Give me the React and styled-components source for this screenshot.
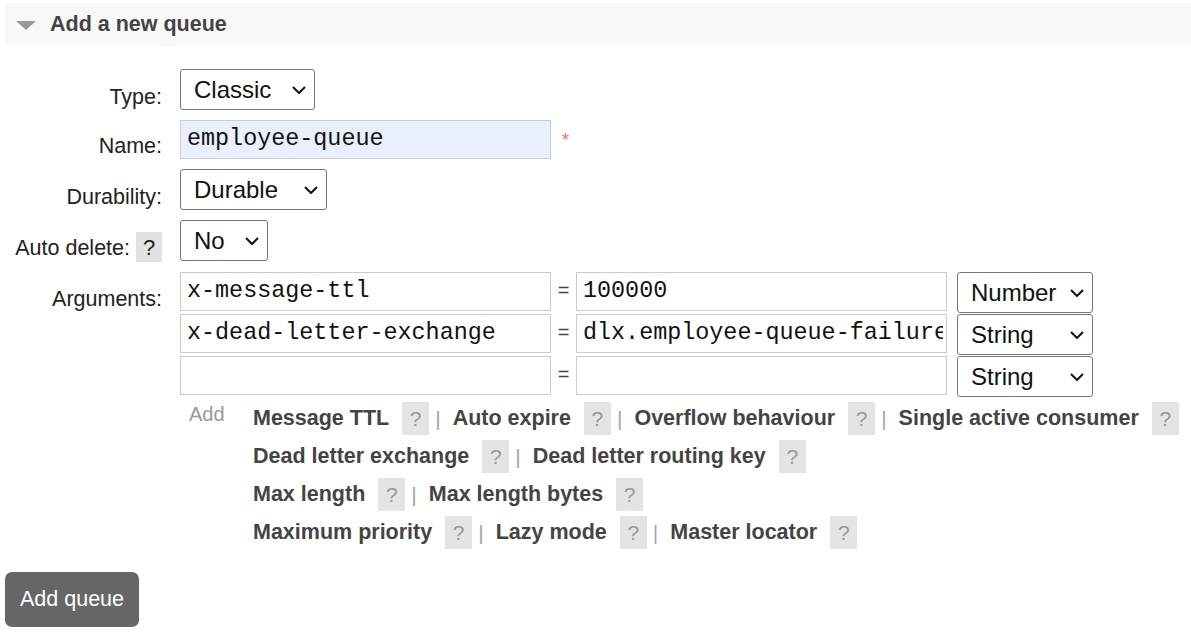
import React from "react";
import styled, { createGlobalStyle } from "styled-components";

const GlobalStyle = createGlobalStyle`
  body {
    margin: 0;
    background: #fff;
    font-family: "Liberation Sans", Arial, sans-serif;
    color: #222;
  }
`;

const Section = styled.div`
  padding: 3px 0 0 5px;
`;

const Header = styled.div`
  height: 43px;
  background: #f8f8f8;
  display: flex;
  align-items: center;
  padding-left: 11px;
  gap: 14px;
`;

const Arrow = styled.span`
  width: 0;
  height: 0;
  border-left: 10px solid transparent;
  border-right: 10px solid transparent;
  border-top: 9px solid #999;
  margin-top: 2px;
`;

const Title = styled.h2`
  margin: 0;
  font-size: 21.5px;
  font-weight: bold;
  color: #444;
`;

const Form = styled.div`
  display: grid;
  grid-template-columns: 170px 1fr;
  column-gap: 5px;
  row-gap: 10px;
  margin-top: 23px;
`;

const Label = styled.div`
  display: flex;
  justify-content: flex-end;
  align-items: flex-start;
  gap: 6px;
  padding-right: 13px;
  padding-top: ${(p) => p.$top || 16}px;
  font-size: 21.5px;
  line-height: 25px;
  color: #222;
`;

const HelpBox = styled.span`
  display: inline-flex;
  align-items: center;
  justify-content: center;
  width: 26px;
  height: 30px;
  margin-top: -4px;
  background: #e2e2e2;
  color: #222;
  font-size: 22px;
`;

const Cell = styled.div`
  display: flex;
  align-items: flex-start;
`;

const SelectBox = styled.div`
  display: flex;
  align-items: center;
  justify-content: space-between;
  box-sizing: border-box;
  width: ${(p) => p.$w}px;
  height: 41px;
  padding: 0 8px 0 13px;
  border: 1px solid #767676;
  border-radius: 3px;
  background: #fff;
  font-size: 24px;
  color: #111;
`;

const Chevron = () => (
  <svg width="14" height="8" viewBox="0 0 14 8">
    <path d="M1 1 L7 7 L13 1" fill="none" stroke="#111" strokeWidth="2" />
  </svg>
);

const Select = ({ w, children }) => (
  <SelectBox $w={w}>
    <span>{children}</span>
    <Chevron />
  </SelectBox>
);

const TextBox = styled.div`
  box-sizing: border-box;
  width: 371px;
  height: 39px;
  padding: 0 3px 0 6px;
  border: 1px solid #ccc;
  background: ${(p) => (p.$filled ? "#e8f0fe" : "#fff")};
  font-family: "Liberation Mono", "Courier New", monospace;
  font-size: 23.4px;
  line-height: 36px;
  color: #111;
  white-space: nowrap;
`;

const TextValue = styled.span`
  display: block;
  overflow: hidden;
`;

const Input = ({ filled, children }) => (
  <TextBox $filled={filled}>
    <TextValue>{children}</TextValue>
  </TextBox>
);

const Required = styled.span`
  color: #f66;
  font-size: 18px;
  margin: 10px 0 0 11px;
`;

const ArgGrid = styled.div`
  display: grid;
  grid-template-columns: 371px 25px 371px 145px;
  grid-auto-rows: 39px;
  row-gap: 3px;
  align-items: start;
`;

const Equals = styled.span`
  text-align: center;
  font-size: 20px;
  line-height: 36px;
  color: #444;
`;

const TypeCell = styled.div`
  padding-left: 10px;
`;

const Extras = styled.div`
  display: flex;
  margin-top: 7px;
`;

const AddLabel = styled.div`
  width: 64px;
  padding: 1px 0 0 9px;
  font-size: 20px;
  color: #999;
`;

const LinkRows = styled.div`
  display: flex;
  flex-direction: column;
  gap: 5px;
`;

const LinkRow = styled.div`
  display: flex;
  align-items: center;
  height: 33px;
`;

const ArgLink = styled.span`
  font-size: 21.5px;
  font-weight: bold;
  color: #444;
  margin-right: 13px;
`;

const ArgHelp = styled.span`
  display: inline-flex;
  align-items: center;
  justify-content: center;
  width: 27px;
  height: 33px;
  background: #e4e4e4;
  color: #999;
  font-size: 21px;
`;

const Sep = styled.span`
  font-size: 21px;
  color: #9aa;
  margin: 0 12px 0 6px;
`;

const Button = styled.button`
  margin-top: 23px;
  height: 55px;
  padding: 0 15px;
  border: none;
  border-radius: 7px;
  background: #666;
  color: #fff;
  font-family: "Liberation Sans", Arial, sans-serif;
  font-size: 21.5px;
`;

const argRows = [
  ["x-message-ttl", "100000", "Number"],
  ["x-dead-letter-exchange", "dlx.employee-queue-failure", "String"],
  ["", "", "String"],
];

const linkRows = [
  ["Message TTL", "Auto expire", "Overflow behaviour", "Single active consumer"],
  ["Dead letter exchange", "Dead letter routing key"],
  ["Max length", "Max length bytes"],
  ["Maximum priority", "Lazy mode", "Master locator"],
];

export default function App() {
  return (
    <>
      <GlobalStyle />
      <Section>
        <Header>
          <Arrow />
          <Title>Add a new queue</Title>
        </Header>
        <Form>
          <Label>Type:</Label>
          <Cell>
            <Select w={135}>Classic</Select>
          </Cell>

          <Label $top={14}>Name:</Label>
          <Cell>
            <Input filled>employee-queue</Input>
            <Required>*</Required>
          </Cell>

          <Label>Durability:</Label>
          <Cell>
            <Select w={147}>Durable</Select>
          </Cell>

          <Label>
            Auto delete: <HelpBox>?</HelpBox>
          </Label>
          <Cell>
            <Select w={88}>No</Select>
          </Cell>

          <Label $top={15}>Arguments:</Label>
          <div>
            <ArgGrid>
              {argRows.map(([k, v, t], i) => (
                <React.Fragment key={i}>
                  <Input>{k}</Input>
                  <Equals>=</Equals>
                  <Input>{v}</Input>
                  <TypeCell>
                    <Select w={136}>{t}</Select>
                  </TypeCell>
                </React.Fragment>
              ))}
            </ArgGrid>
            <Extras>
              <AddLabel>Add</AddLabel>
              <LinkRows>
                {linkRows.map((row, i) => (
                  <LinkRow key={i}>
                    {row.map((name, j) => (
                      <React.Fragment key={name}>
                        {j > 0 && <Sep>|</Sep>}
                        <ArgLink>{name}</ArgLink>
                        <ArgHelp>?</ArgHelp>
                      </React.Fragment>
                    ))}
                  </LinkRow>
                ))}
              </LinkRows>
            </Extras>
          </div>
        </Form>
        <Button>Add queue</Button>
      </Section>
    </>
  );
}
